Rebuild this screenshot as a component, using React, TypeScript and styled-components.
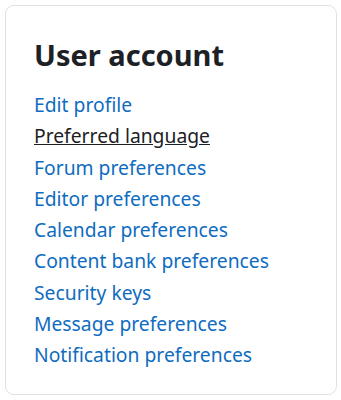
import React from 'react'
import styled, { createGlobalStyle } from 'styled-components'

const GlobalStyle = createGlobalStyle`
  body {
    margin: 0;
    background: #ffffff;
    font-family: "Noto Sans", "Open Sans", sans-serif;
  }
`

const links = [
  'Edit profile',
  'Preferred language',
  'Forum preferences',
  'Editor preferences',
  'Calendar preferences',
  'Content bank preferences',
  'Security keys',
  'Message preferences',
  'Notification preferences',
]

const App = () => {
  return (
    <>
      <GlobalStyle />
      <Page>
        <Card>
          <Title>User account</Title>
          <LinkList>
            {links.map((label) => (
              <li key={label}>
                <StyledLink href="#" $active={label === 'Preferred language'}>
                  {label}
                </StyledLink>
              </li>
            ))}
          </LinkList>
        </Card>
      </Page>
    </>
  )
}

export default App

const Page = styled('div')`
  padding: 5px 4px 5px 5px;
`

const Card = styled('div')`
  height: 390px;
  box-sizing: border-box;
  border: 1px solid #dee2e6;
  border-radius: 9px;
  padding: 32px 28px 0 28px;
`

const Title = styled('h3')`
  margin: 0 0 17px 0;
  font-size: 29px;
  font-weight: 700;
  line-height: 34px;
  color: #1d2125;
`

const LinkList = styled('ul')`
  list-style: none;
  margin: 0;
  padding: 0;
  font-size: 19.3px;
  line-height: 31.25px;
`

const StyledLink = styled('a')<{ $active?: boolean }>`
  color: ${(p) => (p.$active ? '#1d2125' : '#0f6cbf')};
  text-decoration: ${(p) => (p.$active ? 'underline' : 'none')};
`
